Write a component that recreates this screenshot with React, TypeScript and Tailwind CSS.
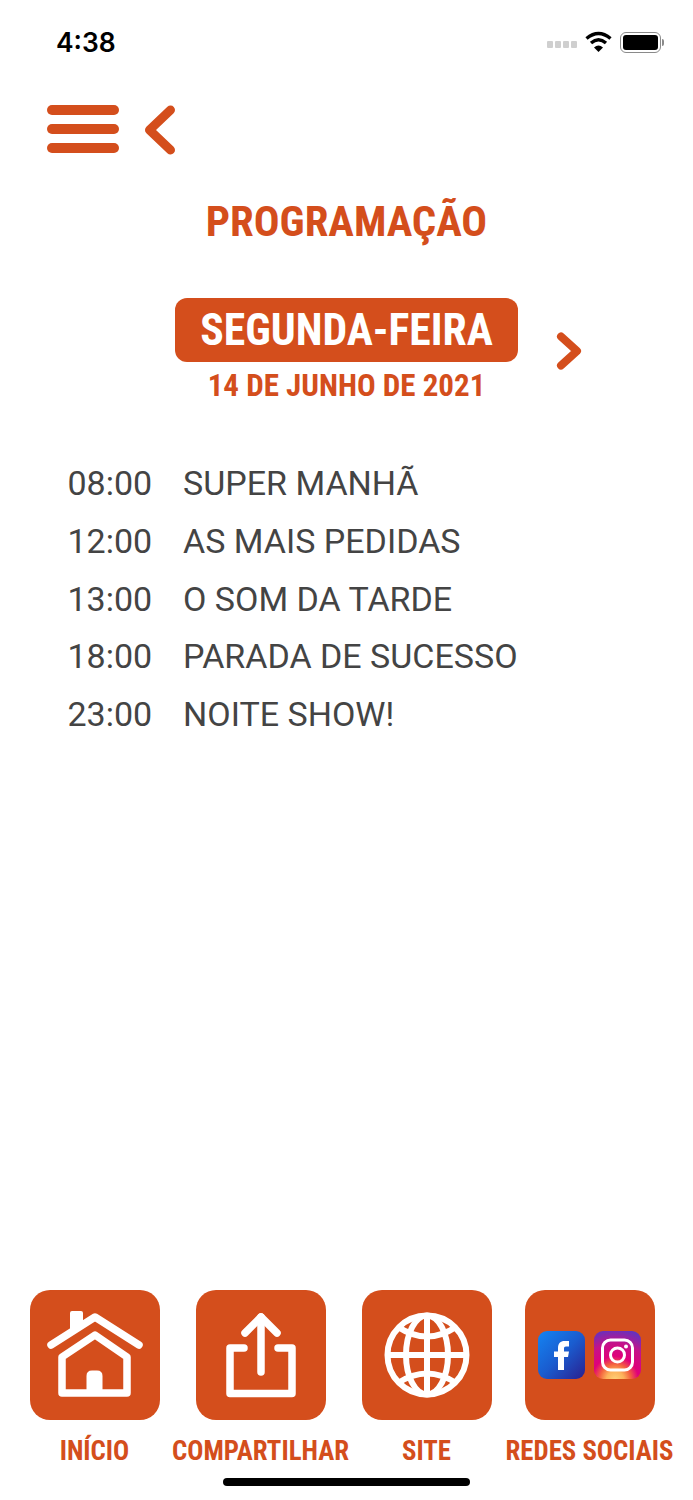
const schedule = [
  { time: "08:00", title: "SUPER MANHÃ" },
  { time: "12:00", title: "AS MAIS PEDIDAS" },
  { time: "13:00", title: "O SOM DA TARDE" },
  { time: "18:00", title: "PARADA DE SUCESSO" },
  { time: "23:00", title: "NOITE SHOW!" },
];

function HomeIcon() {
  return (
    <svg width="96" height="90" viewBox="0 0 96 90" fill="none" stroke="white" strokeWidth="7.5" strokeLinecap="round" strokeLinejoin="round">
      <path d="M4 35 L48 7 L92 35" />
      <path d="M25 21 V3 H34 V14 Z" fill="white" strokeWidth="4" />
      <path d="M15 47 L48 25 L80 47 V83 H15 Z" />
      <path d="M42 83 V66 Q42 63 45 63 H50 Q53 63 53 66 V83 Z" fill="white" strokeWidth="5" />
    </svg>
  );
}

function ShareIcon() {
  return (
    <svg width="74" height="88" viewBox="0 0 74 88" fill="none" stroke="white" strokeWidth="7.5" strokeLinecap="round" strokeLinejoin="round">
      <path d="M20 37 H6 V82.5 H68 V37 H54" />
      <path d="M37 61 V6" />
      <path d="M21 22 L37 6 L53 22" />
    </svg>
  );
}

function GlobeIcon() {
  return (
    <svg width="86" height="86" viewBox="0 0 86 86" fill="none" stroke="white" strokeWidth="6">
      <circle cx="43" cy="43" r="39.5" />
      <ellipse cx="43" cy="43" rx="21" ry="39.5" />
      <path d="M43 3 V83" />
      <path d="M3 43 H83" />
      <path d="M14 15 Q43 34 72 15" />
      <path d="M14 71 Q43 52 72 71" />
    </svg>
  );
}

function FacebookIcon() {
  return (
    <svg width="47" height="48" viewBox="0 0 47 48">
      <defs>
        <linearGradient id="fb" x1="0" y1="0" x2="1" y2="1">
          <stop offset="0" stopColor="#1484f2" />
          <stop offset="0.5" stopColor="#1a5ccf" />
          <stop offset="1" stopColor="#2a1f8f" />
        </linearGradient>
      </defs>
      <rect width="47" height="48" rx="9" fill="url(#fb)" />
      <path d="M20 39 V26 H16 V20.5 H20 V17 C20 12.5 22.5 10 26.5 10 H31 V15.5 H28 C26.5 15.5 26 16.3 26 17.6 V20.5 H31 L30 26 H26 V39 Z" fill="white" />
    </svg>
  );
}

function InstagramIcon() {
  return (
    <svg width="47" height="48" viewBox="0 0 47 48">
      <defs>
        <radialGradient id="ig" cx="0.45" cy="1.02" r="1.1">
          <stop offset="0" stopColor="#ffd27a" />
          <stop offset="0.17" stopColor="#fdb25a" />
          <stop offset="0.3" stopColor="#f4633f" />
          <stop offset="0.45" stopColor="#e0007a" />
          <stop offset="0.7" stopColor="#c4128a" />
          <stop offset="1" stopColor="#5a35c4" />
        </radialGradient>
      </defs>
      <rect width="47" height="48" rx="9" fill="url(#ig)" />
      <rect x="8.5" y="9" width="30" height="30" rx="8" fill="none" stroke="white" strokeWidth="3" />
      <circle cx="23.5" cy="24" r="7" fill="none" stroke="white" strokeWidth="3" />
      <circle cx="32" cy="15.5" r="2" fill="white" />
    </svg>
  );
}

function Tile({ label, children }: { label: string; children: React.ReactNode }) {
  return (
    <div className="flex flex-col items-center">
      <div className="flex h-[130px] w-[130px] items-center justify-center rounded-[20px] bg-[#d44e1c]">{children}</div>
      <div className="mt-[15px] whitespace-nowrap text-[26.8px] leading-[32px] font-bold text-[#d44e1c] [font-stretch:75%]">{label}</div>
    </div>
  );
}

export default function App() {
  return (
    <div className="flex h-[1500px] w-[693px] flex-col bg-white font-['Roboto',sans-serif]">
      <div className="flex h-[84px] items-center justify-between pr-[29px] pl-[56px]">
        <span className="font-['Inter',sans-serif] text-[26.4px] leading-none font-semibold text-black">4:38</span>
        <div className="flex items-center">
          <div className="mt-[4px] mr-[8px] flex gap-[2px]">
            <span className="h-[7px] w-[6px] rounded-[1px] bg-[#cfcfcf]" />
            <span className="h-[7px] w-[6px] rounded-[1px] bg-[#cfcfcf]" />
            <span className="h-[7px] w-[6px] rounded-[1px] bg-[#cfcfcf]" />
            <span className="h-[7px] w-[6px] rounded-[1px] bg-[#cfcfcf]" />
          </div>
          <svg width="27" height="22" viewBox="0 0 27 22" fill="none" stroke="black" strokeWidth="3.4">
            <path d="M1.5 7.5 Q13.5 -2.5 25.5 7.5" />
            <path d="M6 12 Q13.5 5.5 21 12" />
            <path d="M13.5 21 L9 16.5 Q13.5 12.5 18 16.5 Z" fill="black" stroke="none" />
          </svg>
          <div className="ml-[8px] flex items-center">
            <div className="h-[21px] w-[41px] rounded-[6px] border-[1.5px] border-[#8a8a8a] p-[2px]">
              <div className="h-full w-full rounded-[3px] bg-black" />
            </div>
            <div className="ml-[1px] h-[7px] w-[2px] rounded-r-full bg-[#8a8a8a]" />
          </div>
        </div>
      </div>

      <div className="mt-[21px] flex items-start pl-[47px]">
        <div className="flex w-[72px] flex-col gap-[9px]">
          <span className="h-[10px] rounded-full bg-[#d44e1c]" />
          <span className="h-[10px] rounded-full bg-[#d44e1c]" />
          <span className="h-[10px] rounded-full bg-[#d44e1c]" />
        </div>
        <svg className="ml-[25px]" width="32" height="50" viewBox="0 0 32 50" fill="none" stroke="#d44e1c" strokeWidth="9" strokeLinecap="round" strokeLinejoin="round">
          <path d="M26.5 5 L5.5 25 L26.5 45" />
        </svg>
      </div>

      <h1 className="mt-[40px] text-center text-[42.8px] leading-[52px] font-bold text-[#d44e1c] [font-stretch:75%]">PROGRAMAÇÃO</h1>

      <div className="relative mt-[51px] flex flex-col items-center">
        <div className="flex h-[64px] w-[343px] items-center justify-center rounded-[12px] bg-[#d44e1c] pt-[1px] text-[43.7px] font-bold text-white [font-stretch:75%]">SEGUNDA-FEIRA</div>
        <div className="mt-[6px] text-[31px] leading-[36px] font-bold text-[#d44e1c] [font-stretch:75%]">14 DE JUNHO DE 2021</div>
        <svg className="absolute top-[34px] left-[556px]" width="26" height="38" viewBox="0 0 26 38" fill="none" stroke="#d44e1c" strokeWidth="8" strokeLinecap="round" strokeLinejoin="round">
          <path d="M5 4.5 L21 19 L5 33.5" />
        </svg>
      </div>

      <div className="mt-[56px] flex flex-col gap-[11.75px] pl-[67.5px] text-[34px] leading-[46px] text-[#444444]">
        {schedule.map((row) => (
          <div key={row.time} className="flex">
            <span className="w-[115.5px]">{row.time}</span>
            <span>{row.title}</span>
          </div>
        ))}
      </div>

      <div className="mt-auto grid grid-cols-[166px_166px_166px_160px] pl-[11.5px]">
        <Tile label="INÍCIO"><HomeIcon /></Tile>
        <Tile label="COMPARTILHAR"><ShareIcon /></Tile>
        <Tile label="SITE"><GlobeIcon /></Tile>
        <Tile label="REDES SOCIAIS">
          <div className="flex gap-[9px]">
            <FacebookIcon />
            <InstagramIcon />
          </div>
        </Tile>
      </div>

      <div className="mt-[11px] mb-[14px] flex justify-center">
        <div className="h-[8px] w-[247px] rounded-full bg-black" />
      </div>
    </div>
  );
}
